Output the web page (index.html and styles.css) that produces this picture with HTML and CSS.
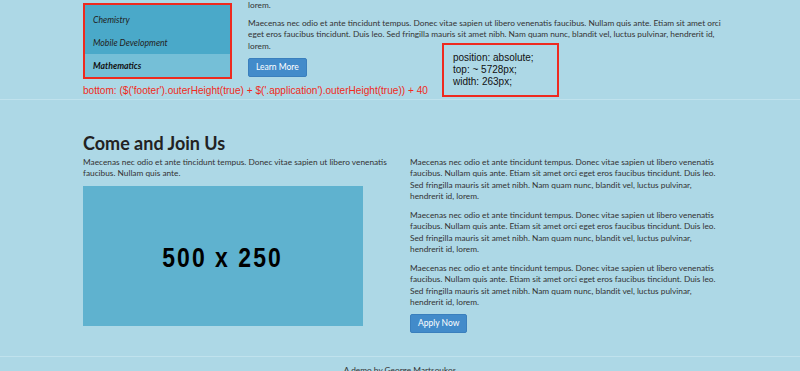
FILE: index.html
```html
<!DOCTYPE html>
<html>
<head>
<meta charset="utf-8">
<link rel="stylesheet" href="styles.css">
</head>
<body>
<div class="page">
  <section class="top">
    <div class="container top-row">
      <div class="side">
        <ul class="courses">
          <li>Chemistry</li>
          <li>Mobile Development</li>
          <li class="active">Mathematics</li>
        </ul>
        <p class="note-red">bottom: ($('footer').outerHeight(true) + $('.application').outerHeight(true)) + 40</p>
      </div>
      <div class="main">
        <p class="first">lorem.</p>
        <p>Maecenas nec odio et ante tincidunt tempus. Donec vitae sapien ut libero venenatis faucibus. Nullam quis ante. Etiam sit amet orci eget eros faucibus tincidunt. Duis leo. Sed fringilla mauris sit amet nibh. Nam quam nunc, blandit vel, luctus pulvinar, hendrerit id, lorem.</p>
        <a class="btn">Learn More</a>
        <div class="code-note">position: absolute;<br>top: ~ 5728px;<br>width: 263px;</div>
      </div>
    </div>
  </section>
  <section class="join">
    <div class="container">
      <h2>Come and Join Us</h2>
      <div class="cols">
        <div class="col">
          <p>Maecenas nec odio et ante tincidunt tempus. Donec vitae sapien ut libero venenatis faucibus. Nullam quis ante.</p>
          <div class="placeholder"><span>500 x 250</span></div>
        </div>
        <div class="col right">
          <p>Maecenas nec odio et ante tincidunt tempus. Donec vitae sapien ut libero venenatis faucibus. Nullam quis ante. Etiam sit amet orci eget eros faucibus tincidunt. Duis leo. Sed fringilla mauris sit amet nibh. Nam quam nunc, blandit vel, luctus pulvinar, hendrerit id, lorem.</p>
          <p>Maecenas nec odio et ante tincidunt tempus. Donec vitae sapien ut libero venenatis faucibus. Nullam quis ante. Etiam sit amet orci eget eros faucibus tincidunt. Duis leo. Sed fringilla mauris sit amet nibh. Nam quam nunc, blandit vel, luctus pulvinar, hendrerit id, lorem.</p>
          <p>Maecenas nec odio et ante tincidunt tempus. Donec vitae sapien ut libero venenatis faucibus. Nullam quis ante. Etiam sit amet orci eget eros faucibus tincidunt. Duis leo. Sed fringilla mauris sit amet nibh. Nam quam nunc, blandit vel, luctus pulvinar, hendrerit id, lorem.</p>
          <a class="btn">Apply Now</a>
        </div>
      </div>
    </div>
  </section>
  <footer class="footer">A demo by George Martsoukos</footer>
</div>
</body>
</html>
```
FILE: styles.css
```css
* { box-sizing: border-box; }
html, body { margin: 0; padding: 0; }
body {
  background: #add8e6;
  font-family: Lato, "Open Sans", sans-serif;
  font-size: 8.3px;
  color: #333;
  line-height: 11.5px;
  overflow: hidden;
}
p { margin: 0 0 6px; }
.container { width: 634px; margin: 0 auto; }
.top { border-bottom: 1px solid #c0e2ed; padding-bottom: 2px; }
.top-row { display: flex; gap: 16px; }
.side { width: 149px; flex: none; padding-top: 3px; }
.courses {
  list-style: none;
  margin: 0;
  padding: 2px 0 0;
  background: #4aa9c9;
  border: 2px solid #ee2a1f;
  font-style: italic;
  font-size: 8.7px;
  color: #222;
}
.courses li { height: 23px; line-height: 23px; padding-left: 8px; }
.courses li:first-child { margin-top: 1px; }
.courses li.active { background: #75bfd7; font-weight: bold; color: #111; }
.note-red {
  margin: 6px 0 0;
  white-space: nowrap;
  font-family: "Liberation Sans", Arial, sans-serif;
  font-size: 10.1px;
  color: #f02a20;
}
.main { position: relative; flex: 1; margin-right: -20px; }
.main .first { margin-bottom: 6px; }
.btn {
  display: block;
  width: fit-content;
  background: #428bca;
  color: #fff;
  border: 1px solid #3a7fbd;
  border-radius: 2px;
  padding: 0 7px;
  height: 19px;
  line-height: 17px;
  font-size: 8.5px;
}
.code-note {
  position: absolute;
  left: 194px;
  top: 43px;
  width: 117px;
  height: 54px;
  border: 2px solid #ee2a1f;
  padding: 7px 0 0 9px;
  font-family: "Liberation Sans", Arial, sans-serif;
  font-size: 10px;
  line-height: 12px;
  color: #111;
}
.join { padding-top: 32px; border-bottom: 1px solid #c0e2ed; padding-bottom: 23px; }
h2 { margin: 0 0 3px; font-size: 18px; line-height: 22px; font-weight: bold; color: #222; }
.cols { display: flex; gap: 21px; }
.col { width: 306px; }
.col.right { width: 307px; }
.col.right p { margin-bottom: 7px; }
.col.right p:last-of-type { margin-bottom: 5px; }
.placeholder {
  margin-top: 5px;
  width: 280px;
  height: 140px;
  background: #5fb2cf;
  display: flex;
  align-items: center;
  justify-content: center;
  padding-top: 5px;
  font-family: "Liberation Sans", Arial, sans-serif;
  font-weight: bold;
  font-size: 28px;
  color: #000;
}
.placeholder span { display: inline-block; transform: scaleX(0.82); letter-spacing: 2.5px; }
.footer { text-align: center; padding-top: 8px; color: #333; }
```
